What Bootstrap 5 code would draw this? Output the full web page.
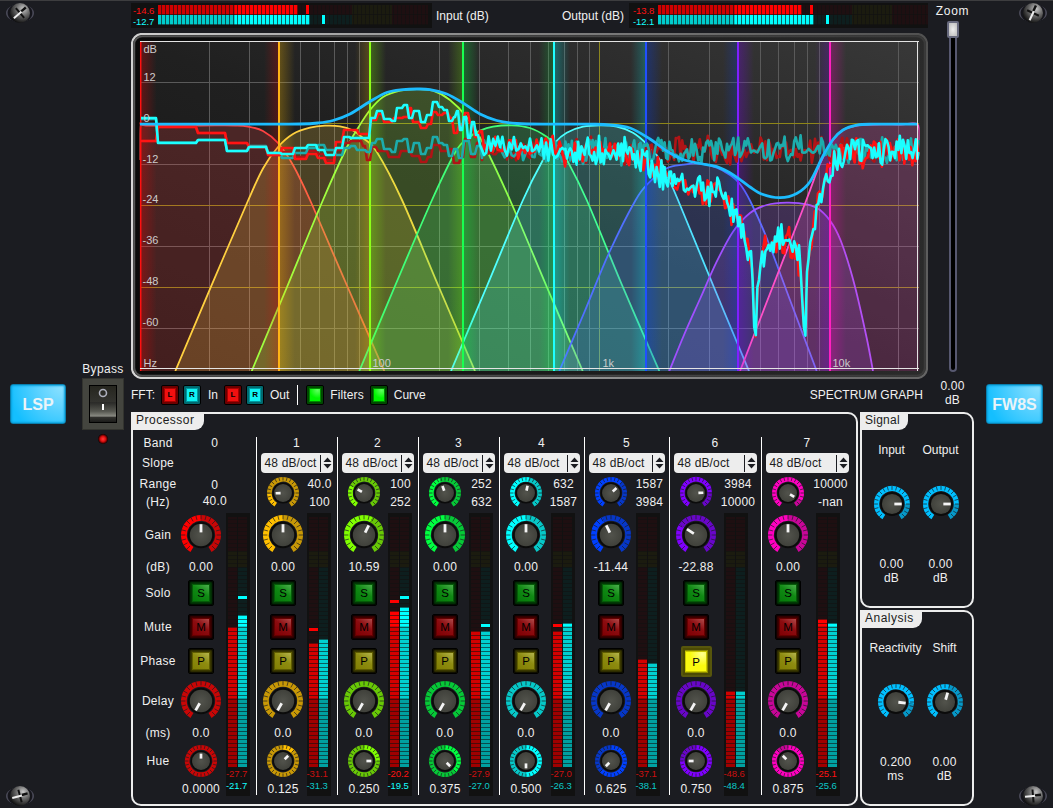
<!DOCTYPE html>
<html lang="en">
<head>
<meta charset="utf-8">
<meta name="viewport" content="width=device-width, initial-scale=1">
<title>LSP FW8S</title>
<link href="https://cdn.jsdelivr.net/npm/bootstrap@5.3.0/dist/css/bootstrap.min.css" rel="stylesheet">
<style>
  body { background:#1b1c21; color:#f0f0f0; font:12px/14px "Liberation Sans", Arial, sans-serif; overflow:hidden; }
  .rack { width:1053px; height:808px; border-top:1px solid #3d3d3f; }
  .side-l { width:131px; padding:0 0 0 5px; }
  .side-r { width:79px; padding:0 5px 0 0; }
  .middle { width:843px; }
  .logo-btn { width:56px; height:40px; border-radius:3px; font:bold 16px/37px "Liberation Sans", Arial, sans-serif; color:#eaf4f8;
    background:radial-gradient(circle at 95% 0,#8fe2ff 0,#5cd2ff 38%,#14bfff 85%); border:1px solid #0a7fae; box-shadow:inset 0 0 2px 1px #0aa0dc; }
  .switch-box { width:42px; height:52px; background:#44453f; border:1px solid #33342f; padding:6px; }
  .rocker { width:28px; height:38px; border:1px solid #000; background:linear-gradient(#26261f 0,#33332f 45%,#2a2a28 46%,#55564f 70%,#8b8c84 84%,#33332f 86%,#1c1c1a); }
  .led { width:10px; height:10px; border-radius:50%; background:radial-gradient(#ff3a3a 0,#e01010 35%,#500 60%,#000 72%); }
  .hmeter { width:301px; height:25px; background:#111; padding:2px 0 2px 2px; }
  .mval { font-size:9.5px; line-height:11px; letter-spacing:-.1px; }
  .hmeter .mval { width:25px; }
  .red-on { color:#ff1212 } .red-mid { color:#cc1010 } .cy-on { color:#14ffff } .cy-mid { color:#0cc8c8 }
  .hbar { position:relative; height:10px; width:270px; }
  .hbar.r { background:linear-gradient(90deg,#1e0f11 0 194px,#1b1b0f 194px 234px,#1e0f11 234px); }
  .hbar.c { background:linear-gradient(90deg,#0d1e1e 0 194px,#1b1b0f 194px 234px,#1e0f11 234px); }
  .hbar::after { content:""; position:absolute; inset:0; background:repeating-linear-gradient(90deg,rgba(17,17,17,0) 0 3px,rgba(17,17,17,.65) 3px 4px); border-bottom:1px solid rgba(17,17,17,.6); }
  .lit, .peak { position:absolute; }
  .hbar .lit, .hbar .peak { top:0; bottom:0; }
  .hbar .peak { width:3px; z-index:2; bottom:1px; }
  .r .lit { background:linear-gradient(90deg,#d00000 0 77px,#ff0000 77px); }
  .c .lit { background:linear-gradient(90deg,#00cdcd 0 77px,#00ffff 77px); }
  .r .peak { background:#f00 } .c .peak { background:#0ff }
  .graph { height:346px; margin-top:5px; display:block; }
  .graph text { font:11px "Liberation Sans", Arial, sans-serif; fill:#ccc; }
  .zoom-col { width:35px; margin-left:7px; padding-top:3px; }
  .zoom-track { position:relative; width:8px; height:351px; margin-top:3px; background:#000; border:2px solid #575870; border-radius:4px; }
  .zoom-thumb { position:absolute; left:-4px; top:-2px; width:12px; height:17px; background:radial-gradient(#eee,#bbb); border:2px solid #686a7e; border-radius:2px; }
  .fft-row { height:33px; padding-bottom:1px; }
  .led-btn { width:18px; height:20px; border:1px solid #000; border-radius:2px; font:bold 8px/12px "Liberation Sans", Arial, sans-serif; color:#000; padding:3px; }
  .led-btn span { display:block; height:12px; text-align:center; }
  .lr { background:#6c0000 } .lr span { background:#f11010; box-shadow:0 0 0 1px #a80000 }
  .lc { background:#006a70 } .lc span { background:#10f4f4; box-shadow:0 0 0 1px #009aa0 }
  .lg { background:#004a00 } .lg span { background:radial-gradient(circle at 75% 10%,#60ff60,#00f800 60%); box-shadow:0 0 0 1px #008a00 }
  .vr { width:1px; background:#fff; opacity:1; }
  .frame { border:2px solid #ededed; border-radius:0 10px 10px 10px; }
  .frame-proc { width:727px; height:394px; }
  .frame-side { width:114px; height:196px; }
  .tab-cap { background:#ededed; color:#1b1c21; height:17px; line-height:15px; border-radius:0 0 9px 0; padding:0 7px 0 4px; letter-spacing:.25px; margin:-1px 0 0 -1px; }
  .strip { display:grid; grid-template-rows:12px 28px 31px 54px 10px 42px 26px 42px 38px 26px 30px 19px; height:358px; letter-spacing:.2px; }
  .strip > * { align-self:center; justify-self:center; white-space:nowrap; }
  .labels { width:41px; padding-left:7px; letter-spacing:.3px; }
  .labels > * { justify-self:center; width:34px; display:flex; justify-content:center; }
  .band { grid-template-columns:54px 1fr; }
  .band.line { border-left:1px solid #fff; grid-template-columns:53px 1fr; }
  .band > .a { grid-column:1; }
  .band > .full { grid-column:1 / 3; }
  .rng { display:flex; flex-direction:column; align-items:center; justify-self:start !important; line-height:18px; }
  .num-last { padding-top:7px; }
  .sel { height:20px; background:#ededed; color:#1b1c21; border-radius:4px; justify-self:start !important; margin-left:4px; padding:0 1px 0 4px; letter-spacing:.15px; }
  .sel .bar-v { width:1px; height:17px; background:#1b1c21; margin-right:2px; }
  .vmeter { grid-column:2; grid-row:4 / 13; align-self:start !important; justify-self:start !important; width:24px; height:283px; margin-top:5px; background:#111; padding:4px 2px 0; }
  .vbar { position:relative; width:10px; height:250px; }
  .vbar.r { background:linear-gradient(#1e0f11 0 34px,#1b1b0f 34px 50px,#1e0f11 50px); border-right:1px solid #111; }
  .vbar.c { background:linear-gradient(#1e0f11 0 34px,#1b1b0f 34px 50px,#0d1e1e 50px); border-right:1px solid #111; }
  .vbar::after { content:""; position:absolute; inset:0; background:repeating-linear-gradient(0deg,rgba(17,17,17,0) 0 3px,rgba(17,17,17,.6) 3px 4px); }
  .vbar .lit { left:0; right:0; bottom:0; }
  .vbar.r .lit { background:linear-gradient(0deg,#a00000 0 69px,#d40000 69px 141px,#ff0000 141px); }
  .vbar.c .lit { background:linear-gradient(0deg,#00a0a0 0 69px,#00d0d0 69px 141px,#00ffff 141px); }
  .vbar .peak { left:0; right:0; height:3px; z-index:2; }
  .vmeter .mval { width:24px; margin-left:-2px; line-height:12px; position:relative; top:1px; }
  .pad { width:26px; height:26px; border:1px solid #000; border-radius:2px; padding:4px; box-shadow:inset 0 0 2px 1px #000; color:#000; text-align:center; line-height:17px; letter-spacing:0; font-size:11.5px; }
  .pad span { display:block; width:16px; height:16px; }
  .ps { background:#033d06 } .ps span { background:linear-gradient(215deg,#4cae4c,#108a14 45%,#067a0a); box-shadow:0 0 0 1px #055c08 }
  .pm { background:#420000 } .pm span { background:linear-gradient(215deg,#b04a4a,#8c0c10 45%,#800004); box-shadow:0 0 0 1px #600 }
  .pp { background:#3e3c00 } .pp span { background:linear-gradient(215deg,#b4b44c,#8e8c10 45%,#827f04); box-shadow:0 0 0 1px #605e00 }
  .pp.on { width:31px; height:31px; background:#8a8800; border:2px solid #57560c; box-shadow:inset 0 0 0 2px #4c4a04; padding:4px 3px; }
  .pp.on span { width:20px; height:19px; line-height:20px; background:radial-gradient(circle at 80% 10%,#ffff90,#fafa10 50%); margin-left:.5px; box-shadow:0 0 0 1px #c8c600; }
  .side-cell { width:49px; }
  .side-cell .knobsvg { margin:29px 0 35px; }
  svg { display:block; }
</style>
</head>
<body>
<div class="rack d-flex">
  <aside class="side-l d-flex flex-column">
    <div class="screw" data-a="-40"></div>
    <div class="d-flex" style="margin-top:337px">
      <button class="logo-btn p-0 text-center" style="margin:22px 0 0 5px">LSP</button>
      <div class="d-flex flex-column align-items-center ms-3" style="width:42px">
        <div style="letter-spacing:.35px;margin-bottom:2px">Bypass</div>
        <div class="switch-box"><div class="rocker d-flex justify-content-center">
          <svg width="12" height="30" viewBox="0 0 12 30"><circle cx="6" cy="7" r="3.5" fill="none" stroke="#aeb0bd" stroke-width="1.6"/><rect x="5" y="18" width="2" height="6" fill="#fff"/></svg>
        </div></div>
        <div class="led" style="margin-top:4px"></div>
      </div>
    </div>
    <div class="screw mt-auto" data-a="-15"></div>
  </aside>

  <main class="middle">
    <div class="d-flex">
      <div style="width:797px">
        <div class="d-flex align-items-center" style="margin-top:2px">
          <div class="hmeter d-flex">
            <div><div class="mval red-on">-14.6</div><div class="mval cy-on">-12.7</div></div>
            <div><div class="hbar r"><div class="lit" style="width:140px"></div><div class="peak" style="left:148px"></div></div>
            <div class="hbar c"><div class="lit" style="width:152px"></div><div class="peak" style="left:164px"></div></div></div>
          </div>
          <span style="margin-left:4px">Input (dB)</span>
          <span class="ms-auto" style="margin-right:5px">Output (dB)</span>
          <div class="hmeter d-flex" style="width:299px">
            <div style="padding-left:2px;width:28px"><div class="mval red-on">-13.8</div><div class="mval cy-on">-12.1</div></div>
            <div><div class="hbar r"><div class="lit" style="width:144px"></div><div class="peak" style="left:152px"></div></div>
            <div class="hbar c"><div class="lit" style="width:156px"></div><div class="peak" style="left:168px"></div></div></div>
          </div>
        </div>
        <svg class="graph" id="graph" width="797" height="346" viewBox="131 33 797 346"></svg>
        <div class="fft-row d-flex align-items-center">
          <span>FFT:</span>
          <div class="led-btn lr" style="margin-left:6px"><span>L</span></div>
          <div class="led-btn lc" style="margin-left:4px"><span>R</span></div>
          <span style="margin-left:7px">In</span>
          <div class="led-btn lr" style="margin-left:6px"><span>L</span></div>
          <div class="led-btn lc" style="margin-left:4px"><span>R</span></div>
          <span style="margin-left:6px">Out</span>
          <div class="vr align-self-center" style="height:20px;margin-left:8px"></div>
          <div class="led-btn lg" style="margin-left:8px"><span></span></div>
          <span style="margin-left:6px;letter-spacing:.1px">Filters</span>
          <div class="led-btn lg" style="margin-left:6px"><span></span></div>
          <span style="margin-left:6px">Curve</span>
          <span class="ms-auto" style="margin-right:5px">SPECTRUM GRAPH</span>
        </div>
      </div>
      <div class="zoom-col d-flex flex-column align-items-center">
        <div style="letter-spacing:.7px">Zoom</div>
        <div class="zoom-track"><div class="zoom-thumb"></div></div>
        <div class="text-center" style="margin-top:7px;letter-spacing:.2px">0.00<br>dB</div>
      </div>
    </div>
    <div class="d-flex">
      <section class="frame frame-proc">
        <div class="tab-cap" style="width:72px;letter-spacing:.5px">Processor</div>
        <div class="d-flex" id="bands" style="margin-top:7px">
          <div class="strip labels">
            <span>Band</span><span>Slope</span><span class="flex-column align-items-center" style="line-height:18px;width:36px"><span>Range</span><span>(Hz)</span></span>
            <span>Gain</span><span>(dB)</span><span>Solo</span><span>Mute</span><span>Phase</span><span>Delay</span><span>(ms)</span><span>Hue</span>
          </div>
        </div>
      </section>
      <div class="d-flex flex-column gap-0" style="margin-left:2px">
        <section class="frame frame-side">
          <div class="tab-cap" style="width:47px">Signal</div>
          <div class="d-flex" style="padding:13px 0 0 5px">
            <div class="side-cell d-flex flex-column align-items-center"><span>Input</span><div class="knobsvg" data-v="90"></div><div class="text-center" style="letter-spacing:.2px">0.00<br>dB</div></div>
            <div class="side-cell d-flex flex-column align-items-center"><span>Output</span><div class="knobsvg" data-v="90"></div><div class="text-center" style="letter-spacing:.2px">0.00<br>dB</div></div>
          </div>
        </section>
        <section class="frame frame-side" style="margin-top:2px">
          <div class="tab-cap" style="width:61px;letter-spacing:.5px">Analysis</div>
          <div class="d-flex" style="padding:13px 0 0 9px">
            <div class="side-cell d-flex flex-column align-items-center"><span class="text-nowrap">Reactivity</span><div class="knobsvg" data-v="96"></div><div class="text-center" style="letter-spacing:.2px">0.200<br>ms</div></div>
            <div class="side-cell d-flex flex-column align-items-center"><span>Shift</span><div class="knobsvg" data-v="16"></div><div class="text-center" style="letter-spacing:.2px">0.00<br>dB</div></div>
          </div>
        </section>
      </div>
    </div>
  </main>

  <aside class="side-r d-flex flex-column align-items-end">
    <div class="screw" data-a="-65"></div>
    <button class="logo-btn p-0 text-center" style="margin:359px 5px 0 0;width:57px">FW8S</button>
    <div class="screw mt-auto" data-a="-5"></div>
  </aside>
</div>

<script>
const hues = ['#ff0000','#ffbf00','#80ff00','#00ff40','#00ffff','#0040ff','#8000ff','#ff00bf'];
const rad = d => (d - 90) * Math.PI / 180;
const mix = (c, k) => '#' + [1, 3, 5].map(i => Math.round(parseInt(c.substr(i, 2), 16) * k + (1 - k) * 27).toString(16).padStart(2, '0')).join('');

// Ring knob: lit arc from the start angle to the value, dim arc for the rest
function knob(R, color, v, full) {
  const a0 = full ? 0 : -148, a1 = full ? 359.5 : 148, w = R * .29, m = R - w / 2;
  const pt = (r, d) => (r * Math.cos(rad(d))).toFixed(2) + ',' + (r * Math.sin(rad(d))).toFixed(2);
  const arc = (s, e, c) => e - s < .5 ? '' : `<path d="M${pt(m, s)} A${m},${m} 0 ${e - s > 180 ? 1 : 0} 1 ${pt(m, e)}" fill="none" stroke="${c}" stroke-width="${w}"/>`;
  let s = arc(a0, Math.max(a0, v), color) + arc(Math.max(a0, v), a1, mix(color, .76));
  for (let d = full ? 0 : -135; d < (full ? 360 : 136); d += 15)
    s += `<path d="M${pt(R - w * .75, d)} L${pt(R + .3, d)}" stroke="#1b1c21" stroke-opacity=".7" stroke-width="1"/>`;
  const b = R * .66, c = R * .56;
  s += `<circle r="${b}" fill="#0b0b0b"/><circle r="${c}" fill="url(#cap)"/><path d="M${pt(R * (R > 17 ? .13 : .15), v)} L${pt(R * (R > 17 ? .54 : .46), v)}" stroke="#f4f4f4" stroke-width="${R > 17 ? 2.8 : 2.7}"/>`;
  return `<svg width="${2 * R}" height="${2 * R}" viewBox="${-R} ${-R} ${2 * R} ${2 * R}" overflow="visible"><defs><radialGradient id="cap"><stop offset="0" stop-color="#52534c"/><stop offset="1" stop-color="#40413b"/></radialGradient></defs>${s}</svg>`;
}
document.querySelectorAll('.knobsvg').forEach(e => e.innerHTML = knob(18, '#00bfff', +e.dataset.v));

document.querySelectorAll('.screw').forEach(e => e.innerHTML = `<svg width="30" height="24" viewBox="-15 -12 30 24"><defs><radialGradient id="ball" cx=".65" cy=".3" r=".75"><stop offset="0" stop-color="#c8c8c8"/><stop offset=".45" stop-color="#6a6a6a"/><stop offset="1" stop-color="#0c0c0c"/></radialGradient></defs>
<ellipse rx="14" ry="9" fill="#4a4a58"/><ellipse rx="12.4" ry="9.4" fill="#15151b"/><circle r="10" fill="url(#ball)"/><g transform="rotate(${e.dataset.a})"><path d="M0-6.5V6.5" stroke="#111" stroke-width="2"/><path d="M-8 0H3" stroke="#eee" stroke-width="2"/><path d="M2-.5H8" stroke="#111" stroke-width="2.4"/></g></svg>`);

// Strip data: width, range knob, ranges, gain angle, gain, hue, meter tops (page y), peaks, readouts
const data = [
  {w:81.5, lo:'0', hi:'40.0', g:0, gv:'0.00', h:'0.0000', r:627, c:615, pc:595.5, rv:'-27.7', cv:'-21.7', con:1, mx:-2, vw:20},
  {w:81, rk:-92, lo:'40.0', hi:'100', g:0, gv:'0.00', h:'0.125', r:643, c:639, pr:627.5, rv:'-31.1', cv:'-31.3', mx:-3, vw:20, sw:72},
  {w:81, rk:-60, lo:'100', hi:'252', g:26, gv:'10.59', h:'0.250', r:611, c:607, pr:599.5, pc:595.5, rv:'-20.2', cv:'-19.5', ron:1, con:1, mx:-3, vw:20, sw:72},
  {w:81, rk:-20, lo:'252', hi:'632', g:0, gv:'0.00', h:'0.375', r:631, c:631, pc:623.5, rv:'-27.9', cv:'-27.0', mx:-3, vw:20, sw:72},
  {w:85, rk:12, lo:'632', hi:'1587', g:0, gv:'0.00', h:'0.500', r:631, c:623, pr:623.5, rv:'-27.0', cv:'-26.3', mx:-2, vw:22, sw:76},
  {w:85, rk:48, lo:'1587', hi:'3984', g:-26, gv:'-11.44', h:'0.625', r:659, c:663, rv:'-37.1', cv:'-38.1', mx:-2, vw:24, sw:76},
  {w:92, rk:88, lo:'3984', hi:'10000', g:-57, gv:'-22.88', h:'0.750', r:691, c:691, rv:'-48.6', cv:'-48.4', mx:1, vw:31, sw:83, on:1},
  {w:92, rk:122, lo:'10000', hi:'-nan', g:0, gv:'0.00', h:'0.875', r:619, c:623, rv:'-25.1', cv:'-25.6', ron:1, mx:1, vw:32, sw:83}
];
const vbar = (k, top, pk) => `<div class="vbar ${k}"><div class="lit" style="height:${767 - top}px"></div>${pk ? `<div class="peak" style="top:${pk - 517}px"></div>` : ''}</div>`;
document.getElementById('bands').insertAdjacentHTML('beforeend', data.map((b, i) => `
<div class="strip band ${i ? 'line' : ''}" style="width:${b.w}px">
  <span class="full">${i}</span>
  ${i ? `<div class="full sel d-flex align-items-center" style="width:${b.sw}px"><span class="me-auto">48 dB/oct</span><i class="bar-v"></i><svg width="9" height="12" viewBox="0 0 9 12"><path d="M.5 5L4.5.5 8.5 5ZM.5 7L4.5 11.500 8.500 7Z" fill="#1b1c21"/></svg></div>
  <div class="a">${knob(16, hues[i], b.rk)}</div><div class="rng" style="width:${b.vw}px"><span>${b.lo}</span><span>${b.hi}</span></div>`
  : `<div class="full"></div><div class="full rng" style="justify-self:center!important;line-height:16px;padding-top:1px"><span>${b.lo}</span><span>${b.hi}</span></div>`}
  <div class="a">${knob(20, hues[i], b.g)}</div><span class="a">${b.gv}</span>
  <div class="a pad ps"><span>S</span></div><div class="a pad pm"><span>M</span></div><div class="a pad pp ${b.on ? 'on' : ''}"><span>P</span></div>
  <div class="a">${knob(20, hues[i], -150)}</div><span class="a">0.0</span>
  <div class="a">${knob(16, hues[i], i * 45, true)}</div><span class="a num-last">${b.h}</span>
  <div class="vmeter" style="margin-left:${b.mx}px"><div class="d-flex">${vbar('r', b.r, b.pr)}${vbar('c', b.c, b.pc)}</div>
  <div class="mval ${b.ron ? 'red-on' : 'red-mid'}">${b.rv}</div><div class="mval ${b.con ? 'cy-on' : 'cy-mid'}">${b.cv}</div></div>
</div>`).join(''));

// ---- Spectrum graph ----
const fx = f => 140.2 + 229.8 * Math.log10(f / 10), dy = d => 123.4 - d * 41 / 12;
const smooth = p => { let s = `M${p[0]}`; for (let i = 0; i < p.length - 1; i++) {
  const a = p[i - 1] || p[i], b = p[i], c = p[i + 1], d = p[i + 2] || c;
  s += ` C${b[0] + (c[0] - a[0]) / 6},${b[1] + (c[1] - a[1]) / 6} ${c[0] - (d[0] - b[0]) / 6},${c[1] - (d[1] - b[1]) / 6} ${c[0]},${c[1]}`; } return s; };
const curves = [
 ['#ff4444', [[139.5,160],[140.5,125.5],[146,125.5],[200,125.5],[235,125.5],[248,126.5],[263,131],[278,143],[293,165],[310,200],[345,281],[384.3,371]]],
 ['#ffd040', [[175.3,371],[211,286.7],[248.3,200],[263.3,168],[278,147],[293,134],[310,127.7],[325,125.7],[340,126.3],[352,130],[363,138],[376.7,151.700],[402,200],[438,285],[475,371]]],
 ['#a0ff40', [[251.7,371],[287,287],[323,200],[346,149],[358,128],[370,110],[383,97],[400,90.7],[416.7,89],[433,90.7],[450,100],[466.7,117],[483,143],[510,200],[546,285],[582.7,371]]],
 ['#40ff78', [[359.3,371],[395,286],[432,200],[456,151],[470,136.7],[480,130.7],[493,126.7],[511.7,125.3],[530,128],[546.7,136.7],[558,147],[568,162],[586.7,200],[622,285],[659.3,371]]],
 ['#50ffff', [[451,371],[487,286],[523,200],[543,160],[555,142.5],[566.7,132.7],[583,126.7],[600,125.3],[616.7,126.5],[633,132.7],[646.7,144],[660,160],[678,200],[713,285],[749,371]]],
 ['#5070ff', [[559.3,371],[584,313],[609,253],[635.7,200],[650,181.7],[666.7,168.3],[683,164.700],[700,163.5],[716.7,167.7],[730,175],[740,184],[750.7,202],[766.7,238],[790,300],[816.7,371]]],
 ['#a050ff', [[669.3,371],[684,335],[700,299],[716.7,261.7],[733,231.7],[750,213],[766.7,205],[786.7,202.7],[806.7,204.300],[820,210],[833,225],[843,246.7],[855,286.7],[866.7,338],[873,371]]],
 ['#ff50c8', [[740,371],[773,286],[806,201],[820,164],[833,140],[843,130],[856.700,125.5],[873,124.5],[900,124.500],[917.5,124.500],[919.5,140]]]
];
let g = `<defs>
<linearGradient id="bz" x1="0" y1=".2" x2="1" y2="0"><stop offset="0" stop-color="#d6d6d6"/><stop offset=".45" stop-color="#8a8a8a"/><stop offset="1" stop-color="#505050"/></linearGradient>
<linearGradient id="bz2"><stop offset="0" stop-color="#555"/><stop offset="1" stop-color="#3a3a3a"/></linearGradient>
<linearGradient id="bk"><stop offset="0" stop-color="#0a0a0a"/><stop offset="1" stop-color="#2b2b2b"/></linearGradient>
<linearGradient id="pl" x1="0" y1="1" x2="1" y2="0"><stop offset="0" stop-color="#151515"/><stop offset=".5" stop-color="#202020"/><stop offset="1" stop-color="#383838"/></linearGradient>
<clipPath id="cl"><rect x="139.500" y="41" width="780" height="330"/></clipPath>`;
hues.forEach((h, i) => g += `<linearGradient id="gr${i}"><stop offset="0" stop-color="${h}" stop-opacity=".3"/><stop offset="1" stop-color="${h}" stop-opacity="0"/></linearGradient><linearGradient id="gl${i}"><stop offset="0" stop-color="${h}" stop-opacity="0"/><stop offset="1" stop-color="${h}" stop-opacity=".24"/></linearGradient>`);
g += `</defs><rect x="132" y="34" width="795" height="344" rx="10" fill="url(#bk)" stroke="url(#bz)" stroke-width="2.200"/><rect x="134.200" y="36.200" width="790.600" height="339.600" rx="8" fill="none" stroke="url(#bz2)" stroke-width="2"/>
<rect x="140" y="41" width="779.500" height="330" fill="url(#pl)"/><g clip-path="url(#cl)">`;
for (const dec of [10, 100, 1000, 10000]) for (let k = 1; k < 10; k++) { const x = Math.floor(fx(dec * k)) + .5; if (x < 917 && x > 142) g += `<path d="M${x} 41V371" stroke="${k == 1 ? '#8c8620' : '#5a5a5a'}"/>`; }
for (let d = 12; d >= -60; d -= 12) g += `<path d="M141 ${Math.floor(dy(d)) + .5}H919" stroke="${d % 24 ? '#5a5a5a' : '#8e8618'}"/>`;
curves.forEach(([c, p]) => {
  const s = smooth(p); g += `<path d="${s} V371 H${p[0][0]}Z" fill="${c}" fill-opacity=".2"/><path d="${s}" fill="none" stroke="${c}" stroke-width="1.8"/>`;
});
const cuts = [10, 40, 100, 252, 632, 1587, 3984, 10000];
const lineCol = ['#ff1010', '#ffb416', '#8cff18', '#18ff50', '#20ffff', '#2050ff', '#8020ff', '#ff20c0'];
cuts.forEach((f, i) => { const x = i ? Math.round(fx(f) + .4) : 140.7; g += `<rect x="${x}" y="41" width="16" height="330" fill="url(#gr${i})"/>`; if (i) g += `<rect x="${x - 15}" y="41" width="15" height="330" fill="url(#gl${i - 1})"/>`; g += `<path d="M${x} 41V371" stroke="${lineCol[i]}" stroke-width="${i ? 2 : 1.500}"/>`; });

// FFT traces: stepped bins at low frequencies, noise above
let seed = 7; const rnd = () => (seed = (seed * 16807) % 2147483647) / 2147483647 - .5;
const steps = a => a.map(([x, y], i) => i ? `H${x - 1} L${x + 1} ${y}` : `M${x} ${y}`).join(' ');
const interp = (t, x) => { for (let i = 1; i < t.length; i++) if (x <= t[i][0]) { const [a, b] = [t[i - 1], t[i]]; return a[1] + (b[1] - a[1]) * (x - a[0]) / (b[0] - a[0]); } return t[t.length - 1][1]; };
const outMean = [[484,146],[520,147],[535,144],[560,151],[600,150],[630,153],[645,157],[655,169],[665,178],[690,185],[700,189],[720,193],[733,210],[742,226],[748,245],[752,262],[754.5,334],[756.2,336],[757.5,284],[759,280],[762,255],[766,244],[780,238],[792,244],[800,262],[804,330],[805.8,334],[807,270],[810,250],[814,225],[820,198],[826,182],[832,165],[840,156],[850,153],[919,151]];
const noise = (mean, amp, x0) => { let s = ''; for (let x = x0; x < 920; x += x < 560 ? 2.3 : 1.6) { const a = Math.abs(x - 755.500) < 4 || Math.abs(x - 805) < 4 ? 3 : amp * (x < 540 ? .8 : 1); s += ` L${x.toFixed(1)} ${(mean(x) + (rnd() + rnd()) * a).toFixed(1)}`; } return s; };
const om = x => interp(outMean, x), im = () => 150.5;
const rIn = steps([[141,141],[157,127],[197,133],[226,143],[248,147],[267,155],[281,152],[294,157],[307,151],[317,154],[325,160],[335,150],[343,143],[350,141],[362,146],[366,160],[371,147],[377,151],[388,157],[400,151],[411,156],[420,162],[427,157],[432,145],[440,151],[448,149],[453,163],[460,157],[464,139],[470,157],[476,143],[481,160]]) + noise(im, 15, 484);
const cIn = steps([[141,119],[157,142.500],[197,140],[226,151],[248,146],[267,153],[281,158],[294,153],[307,148],[317,145],[325,150],[335,155],[343,148],[350,146],[356,150],[366,152],[371,143],[376,139],[383,149],[391,152],[396,141],[403,139],[408,152],[413,143],[420,154],[426,148],[432,137],[438,143],[443,145],[448,156],[453,149],[458,158],[463,141],[470,154],[476,146],[481,158]]) + noise(im, 16, 484);
const rOut = steps([[141,141],[157,127],[197,133],[226,143],[248,147],[267,155],[281,148],[294,159],[307,154],[317,158],[325,163],[335,142],[343,130],[350,130],[358,134],[370,120],[377,114],[383,122],[393,118],[403,117],[409,108],[412,122],[420,128],[427,124],[432,112],[437,115],[443,113],[449,118],[453,133],[458,125],[464,113],[469,123],[474,137],[479,131],[483,149]]) + noise(om, 17, 486);
const cOut = steps([[141,118],[157,143],[197,140],[226,151],[248,147],[267,153],[281,154],[294,148],[307,145],[317,150],[325,155],[335,148],[343,137],[350,138],[370,118],[376,111],[383,119],[391,121],[396,108],[403,105],[408,118],[413,111],[420,122],[426,115],[432,102],[438,107],[443,110],[448,121],[453,117],[456,111],[459,130],[463,117],[467,138],[471,122],[475,135],[479,145]]) + noise(om, 18, 484);
const tr = (d, c) => `<path d="${d}" fill="none" stroke="${c}" stroke-width="2.600" stroke-linejoin="round"/>`;
g += tr(rIn, '#b01416') + tr(cIn, '#1cacac') + tr(rOut, '#ff1414') + tr(cOut, '#1cffff');
g += `<path d="${smooth([[140,124.200],[200,124.200],[260,124.200],[300,124],[318,123],[333,120.5],[350,114],[370,101.5],[386.700,92.500],[403,89.600],[416.700,89],[430,89.600],[446.700,94],[463,103],[480,114],[496.700,120.500],[516.700,123.500],[550,124.200],[590,124.200],[610,124.800],[630,128],[650,139],[666.700,151],[683,159.500],[700,163.500],[716.700,166.700],[733,174.700],[750,187],[763,194.500],[780,197.700],[796.700,193.500],[810,181.700],[823,156],[833,139.500],[843,130],[856.700,125.200],[873,124.200],[918,124.200]])}" fill="none" stroke="#1cbcff" stroke-width="2.8"/>`;
g += `<path d="M140 41.500H919M917.500 41V371M140 368.500H919" stroke="#e4e4e4" fill="none"/></g>`;
g += `<text x="143.500" y="53">dB</text><text x="143.500" y="367">Hz</text>`;
[[12,81],[0,122],[-12,163],[-24,203],[-36,244],[-48,285],[-60,326]].forEach(([t, y]) => g += `<text x="${t < 0 ? 142.500 : 143.500}" y="${y}">${t}</text>`);
g += `<text x="372.500" y="367">100</text><text x="602.500" y="367">1k</text><text x="832.500" y="367">10k</text>`;
document.getElementById('graph').innerHTML = g;
</script>
<script src="https://cdn.jsdelivr.net/npm/bootstrap@5.3.0/dist/js/bootstrap.bundle.min.js"></script>
</body>
</html>
